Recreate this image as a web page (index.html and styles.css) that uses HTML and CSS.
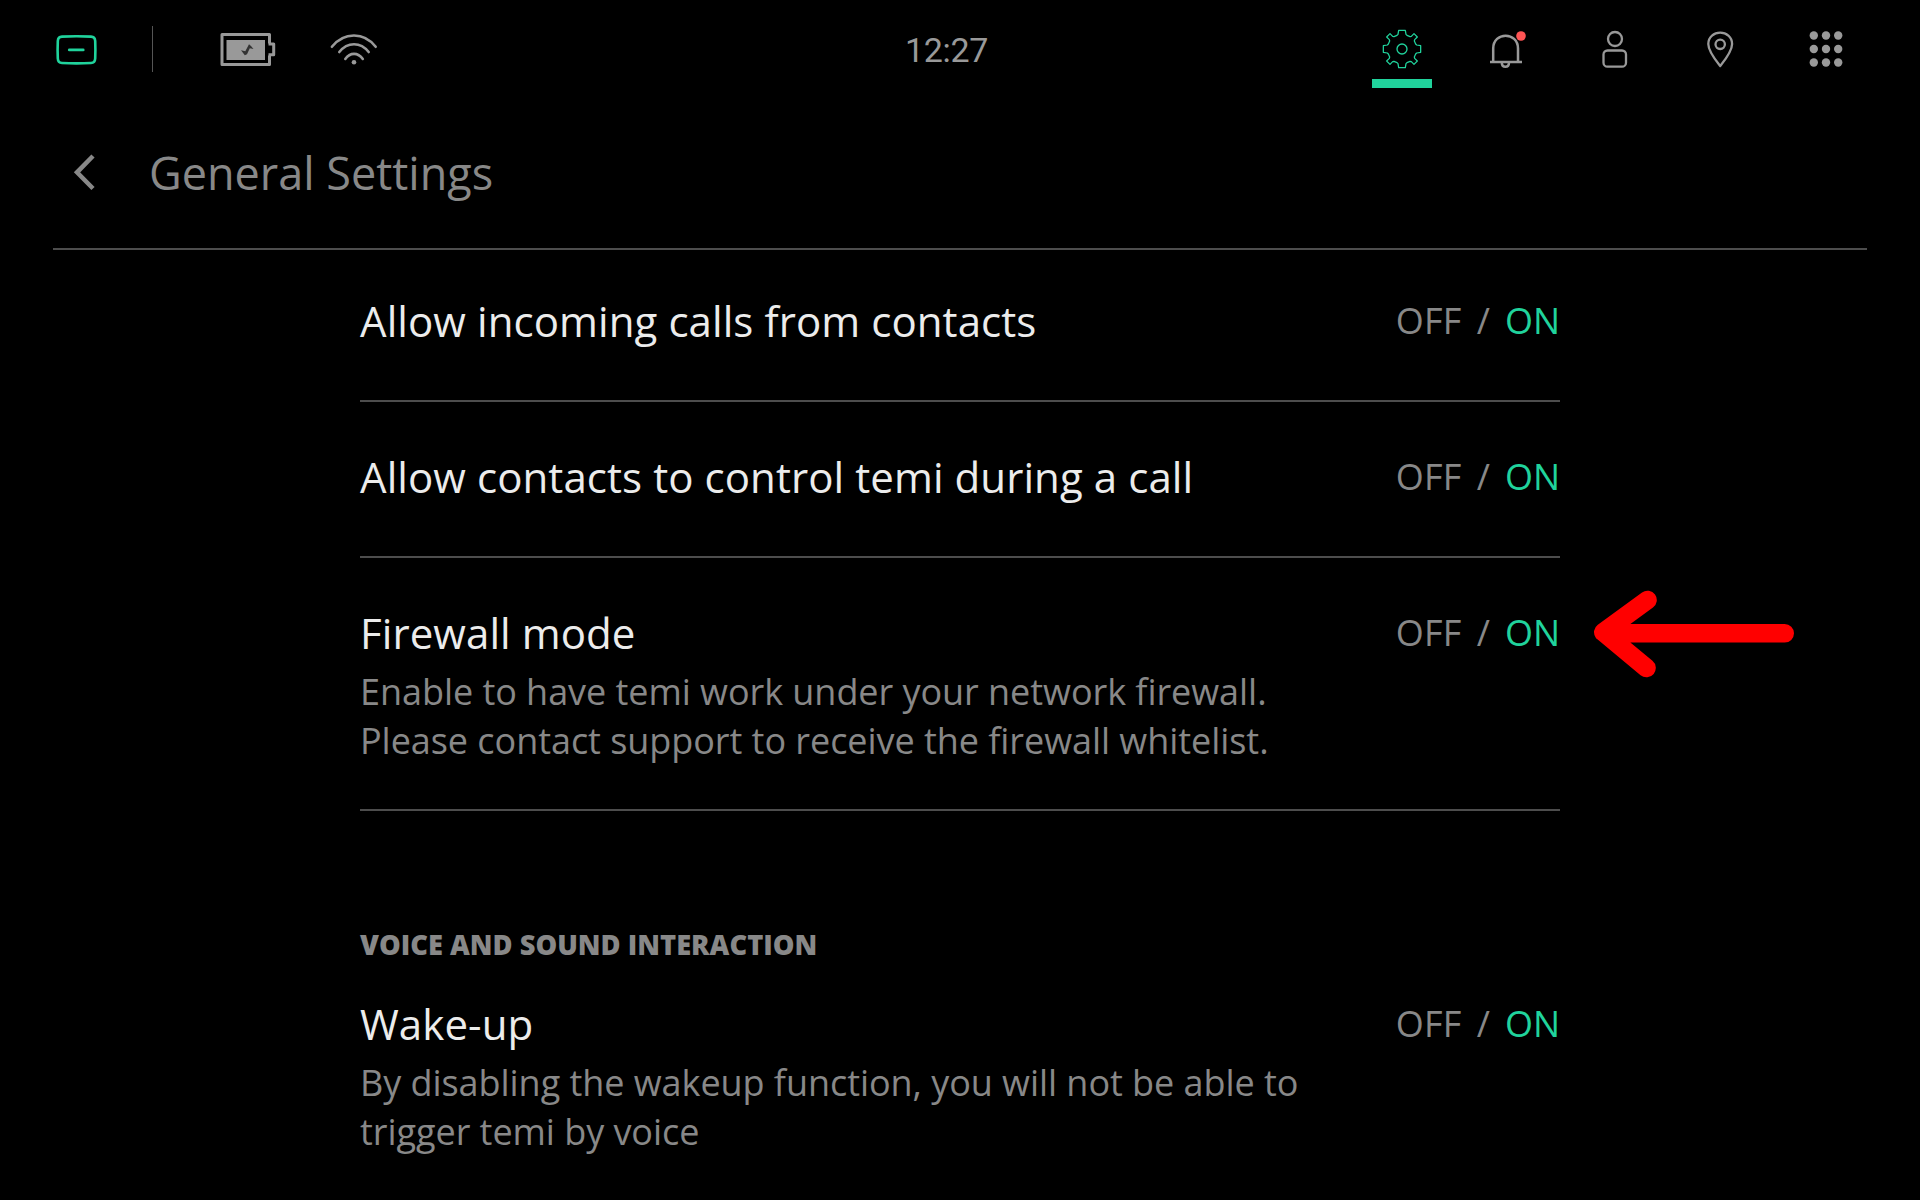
FILE: index.html
```html
<!DOCTYPE html>
<html lang="en">
<head>
<meta charset="utf-8">
<title>General Settings</title>
<link rel="stylesheet" href="styles.css">
</head>
<body>
<div class="screen">
  <header class="topbar">
    <div class="status">
      <svg class="home" width="44" height="34" viewBox="54 33 44 34"><path d="M62 36.6Q76.500 35.800 91 36.600Q95 36.800 95.200 41Q95.600 50 95.200 58.500Q95 62.800 91 63Q76.500 63.800 62 63Q58 62.800 57.800 58.500Q57.400 50 57.800 41Q58 36.800 62 36.600Z" stroke-width="2.600"/><path d="M69.300 49.900H83.200" stroke-width="2.800"/></svg>
      <span class="divider"></span>
      <svg class="battery" width="58" height="38" viewBox="219 31 58 38"><path class="fill" d="M226.500 40H265V60H226.500Z"/><path class="line" d="M269.500 43.500V34.500H222V64.500H269.500V55.500M268.500 44H273.700V54.800H268.500" stroke-width="3"/><path class="bolt" d="M249 44.300L245.300 51.300L241 50.300L244.800 55.300L247 54.300L249.800 48.200L253.500 49L251 46Z"/></svg>
      <svg class="wifi" width="52" height="38" viewBox="328 31 52 38"><path class="line" d="M331.900 46.800C344 31.800 364 31.800 375.700 46.800M339.300 52C347.500 41.600 360.500 41.600 368.700 52M345.300 59C350 52.200 358 52.200 362.800 59" stroke-width="2.600"/><circle class="fill" cx="354" cy="62.300" r="2.300"/></svg>
    </div>
    <div class="clock">12:27</div>
    <nav class="tabs">
      <span class="tab active"><svg width="40" height="40" viewBox="-60 -60 120 120"><path stroke-width="3.800" d="M-10 -56H10L12 -44L15 -41L24 -37L28 -38L36 -46L46 -36L38 -28L37 -24L41 -15L44 -12L56 -10V10L44 12L41 15L37 24L38 28L46 36L36 46L28 38L24 37L15 41L12 44L10 56H-10L-12 44L-15 41L-24 37L-28 38L-36 46L-46 36L-38 28L-37 24L-41 15L-44 12L-56 10V-10L-44 -12L-41 -15L-37 -24L-38 -28L-46 -36L-36 -46L-28 -38L-24 -37L-15 -41L-12 -44Z"/><circle r="15" stroke-width="4"/></svg></span>
      <span class="tab"><svg width="40" height="40" viewBox="1488 29 40 40"><path class="line" stroke-width="2.500" stroke-linecap="butt" d="M1493.200 62V48.500C1493.200 31.500 1518 31.500 1518 48.500V62M1490 62H1522M1501.800 62.500C1501.800 68.200 1509 68.200 1509 62.500"/><circle class="dot" cx="1521" cy="36" r="4.800"/></svg></span>
      <span class="tab"><svg width="40" height="40" viewBox="1594 29 40 40"><circle class="line" cx="1615" cy="39" r="7" stroke-width="2.300"/><rect class="line" x="1603.500" y="50.500" width="22.500" height="16.200" rx="4" stroke-width="2.300"/></svg></span>
      <span class="tab"><svg width="40" height="40" viewBox="1700 29 40 40"><path class="line" stroke-width="2.300" d="M1720.200 66C1717 62 1708.300 51.500 1708.300 44C1708.300 28.900 1732.100 28.900 1732.100 44C1732.100 51.500 1723.400 62 1720.200 66Z"/><circle class="line" cx="1720.200" cy="44.300" r="4.700" stroke-width="2.300"/></svg></span>
      <span class="tab"><svg width="40" height="40" viewBox="1806 29 40 40"><g class="fill"><circle cx="1813.800" cy="35.500" r="4.200"/><circle cx="1826" cy="35.500" r="4.200"/><circle cx="1838.200" cy="35.500" r="4.200"/><circle cx="1813.800" cy="49" r="4.200"/><circle cx="1826" cy="49" r="4.200"/><circle cx="1838.200" cy="49" r="4.200"/><circle cx="1813.800" cy="62.500" r="4.200"/><circle cx="1826" cy="62.500" r="4.200"/><circle cx="1838.200" cy="62.500" r="4.200"/></g></svg></span>
    </nav>
  </header>
  <div class="heading">
    <svg class="back" width="24" height="38" viewBox="0 0 24 38"><path d="M20 3L4 19.300L20 35.500"/></svg>
    <h1>General Settings</h1>
  </div>
  <main class="list">
    <section class="row">
      <h2>Allow incoming calls from contacts</h2>
      <div class="toggle"><span class="off">OFF</span><span>/</span><span class="on">ON</span></div>
    </section>
    <section class="row">
      <h2>Allow contacts to control temi during a call</h2>
      <div class="toggle"><span class="off">OFF</span><span>/</span><span class="on">ON</span></div>
    </section>
    <section class="row detailed">
      <div>
        <h2>Firewall mode</h2>
        <p>Enable to have temi work under your network firewall.<br>Please contact support to receive the firewall whitelist.</p>
      </div>
      <div class="toggle"><span class="off">OFF</span><span>/</span><span class="on">ON</span></div>
      <svg class="arrow" width="204" height="90" viewBox="1592 589 204 90"><path d="M1647.500 600L1603.300 632.200L1646.500 668M1606 633.300H1784.700"/></svg>
    </section>
    <h3>VOICE AND SOUND INTERACTION</h3>
    <section class="row last">
      <div>
        <h2>Wake-up</h2>
        <p>By disabling the wakeup function, you will not be able to<br>trigger temi by voice</p>
      </div>
      <div class="toggle"><span class="off">OFF</span><span>/</span><span class="on">ON</span></div>
    </section>
  </main>
</div>
</body>
</html>
```
FILE: styles.css
```css
* { box-sizing: border-box; margin: 0; padding: 0; }
body { background: #000; font-family: "Open Sans", sans-serif; color: #888; }
.screen { width: 1920px; height: 1200px; overflow: hidden; background: #000; display: flex; flex-direction: column; }
svg { display: block; fill: none; stroke-linecap: round; stroke-linejoin: round; }
.line { stroke: #999; }
.fill { fill: #999; }

.topbar { height: 98px; flex: none; display: grid; grid-template-columns: 1fr auto 1fr; align-items: center; padding: 0 64px 0 54px; }
.status { display: flex; align-items: center; }
.home { stroke: #20d39c; margin-top: 2px; }
.divider { width: 1px; height: 46px; margin-left: 54px; background: #555; }
.battery { margin: 2px 0 0 66px; stroke-linecap: butt; }
.bolt { fill: #333; }
.wifi { margin: 2px 0 0 51px; }
.clock { font: 34px/40px Roboto, sans-serif; color: #999; margin: 1px 17px 0 0; letter-spacing: -0.3px; }
.tabs { display: flex; justify-content: flex-end; gap: 46px; align-self: start; padding-top: 29px; margin-left: -17px; }
.tab { width: 60px; height: 59px; display: flex; justify-content: center; }
.tab.active { border-bottom: 9px solid #20d39c; }
.tab.active svg { stroke: #20d39c; }
.dot { fill: #ff5454; }

.heading { height: 152px; flex: none; margin: 0 53px; border-bottom: 2px solid #4d4d4d; display: flex; align-items: flex-start; }
.back { margin: 55px 0 0 20px; stroke: #888; stroke-width: 4.500; stroke-linecap: butt; stroke-linejoin: miter; }
h1 { font-size: 45px; line-height: 61px; font-weight: 400; margin: 44px 0 0 52px; }

.list { width: 1200px; margin: 0 auto; }
.row { position: relative; display: flex; justify-content: space-between; align-items: flex-start; padding: 46px 0 51px; border-bottom: 2px solid #4d4d4d; }
.row:first-child { padding-top: 42px; }
.row.detailed { padding-bottom: 44px; }
.row.last { padding-top: 31px; border: 0; }
h2 { font-size: 42px; line-height: 57px; font-weight: 400; color: #ececec; letter-spacing: 0.08px; }
p { font-size: 36px; line-height: 49px; margin-top: 6px; letter-spacing: -0.05px; }
h3 { font-size: 27.3px; line-height: 38px; font-weight: 800; margin-top: 115px; }
.toggle { display: flex; gap: 15px; margin-top: 4px; font-size: 36px; line-height: 49px; }
.off { letter-spacing: 0.3px; }
.on { color: #20d39c; }
.arrow { position: absolute; left: 1232px; top: 31px; stroke: #f00; stroke-width: 18.600; }
```
